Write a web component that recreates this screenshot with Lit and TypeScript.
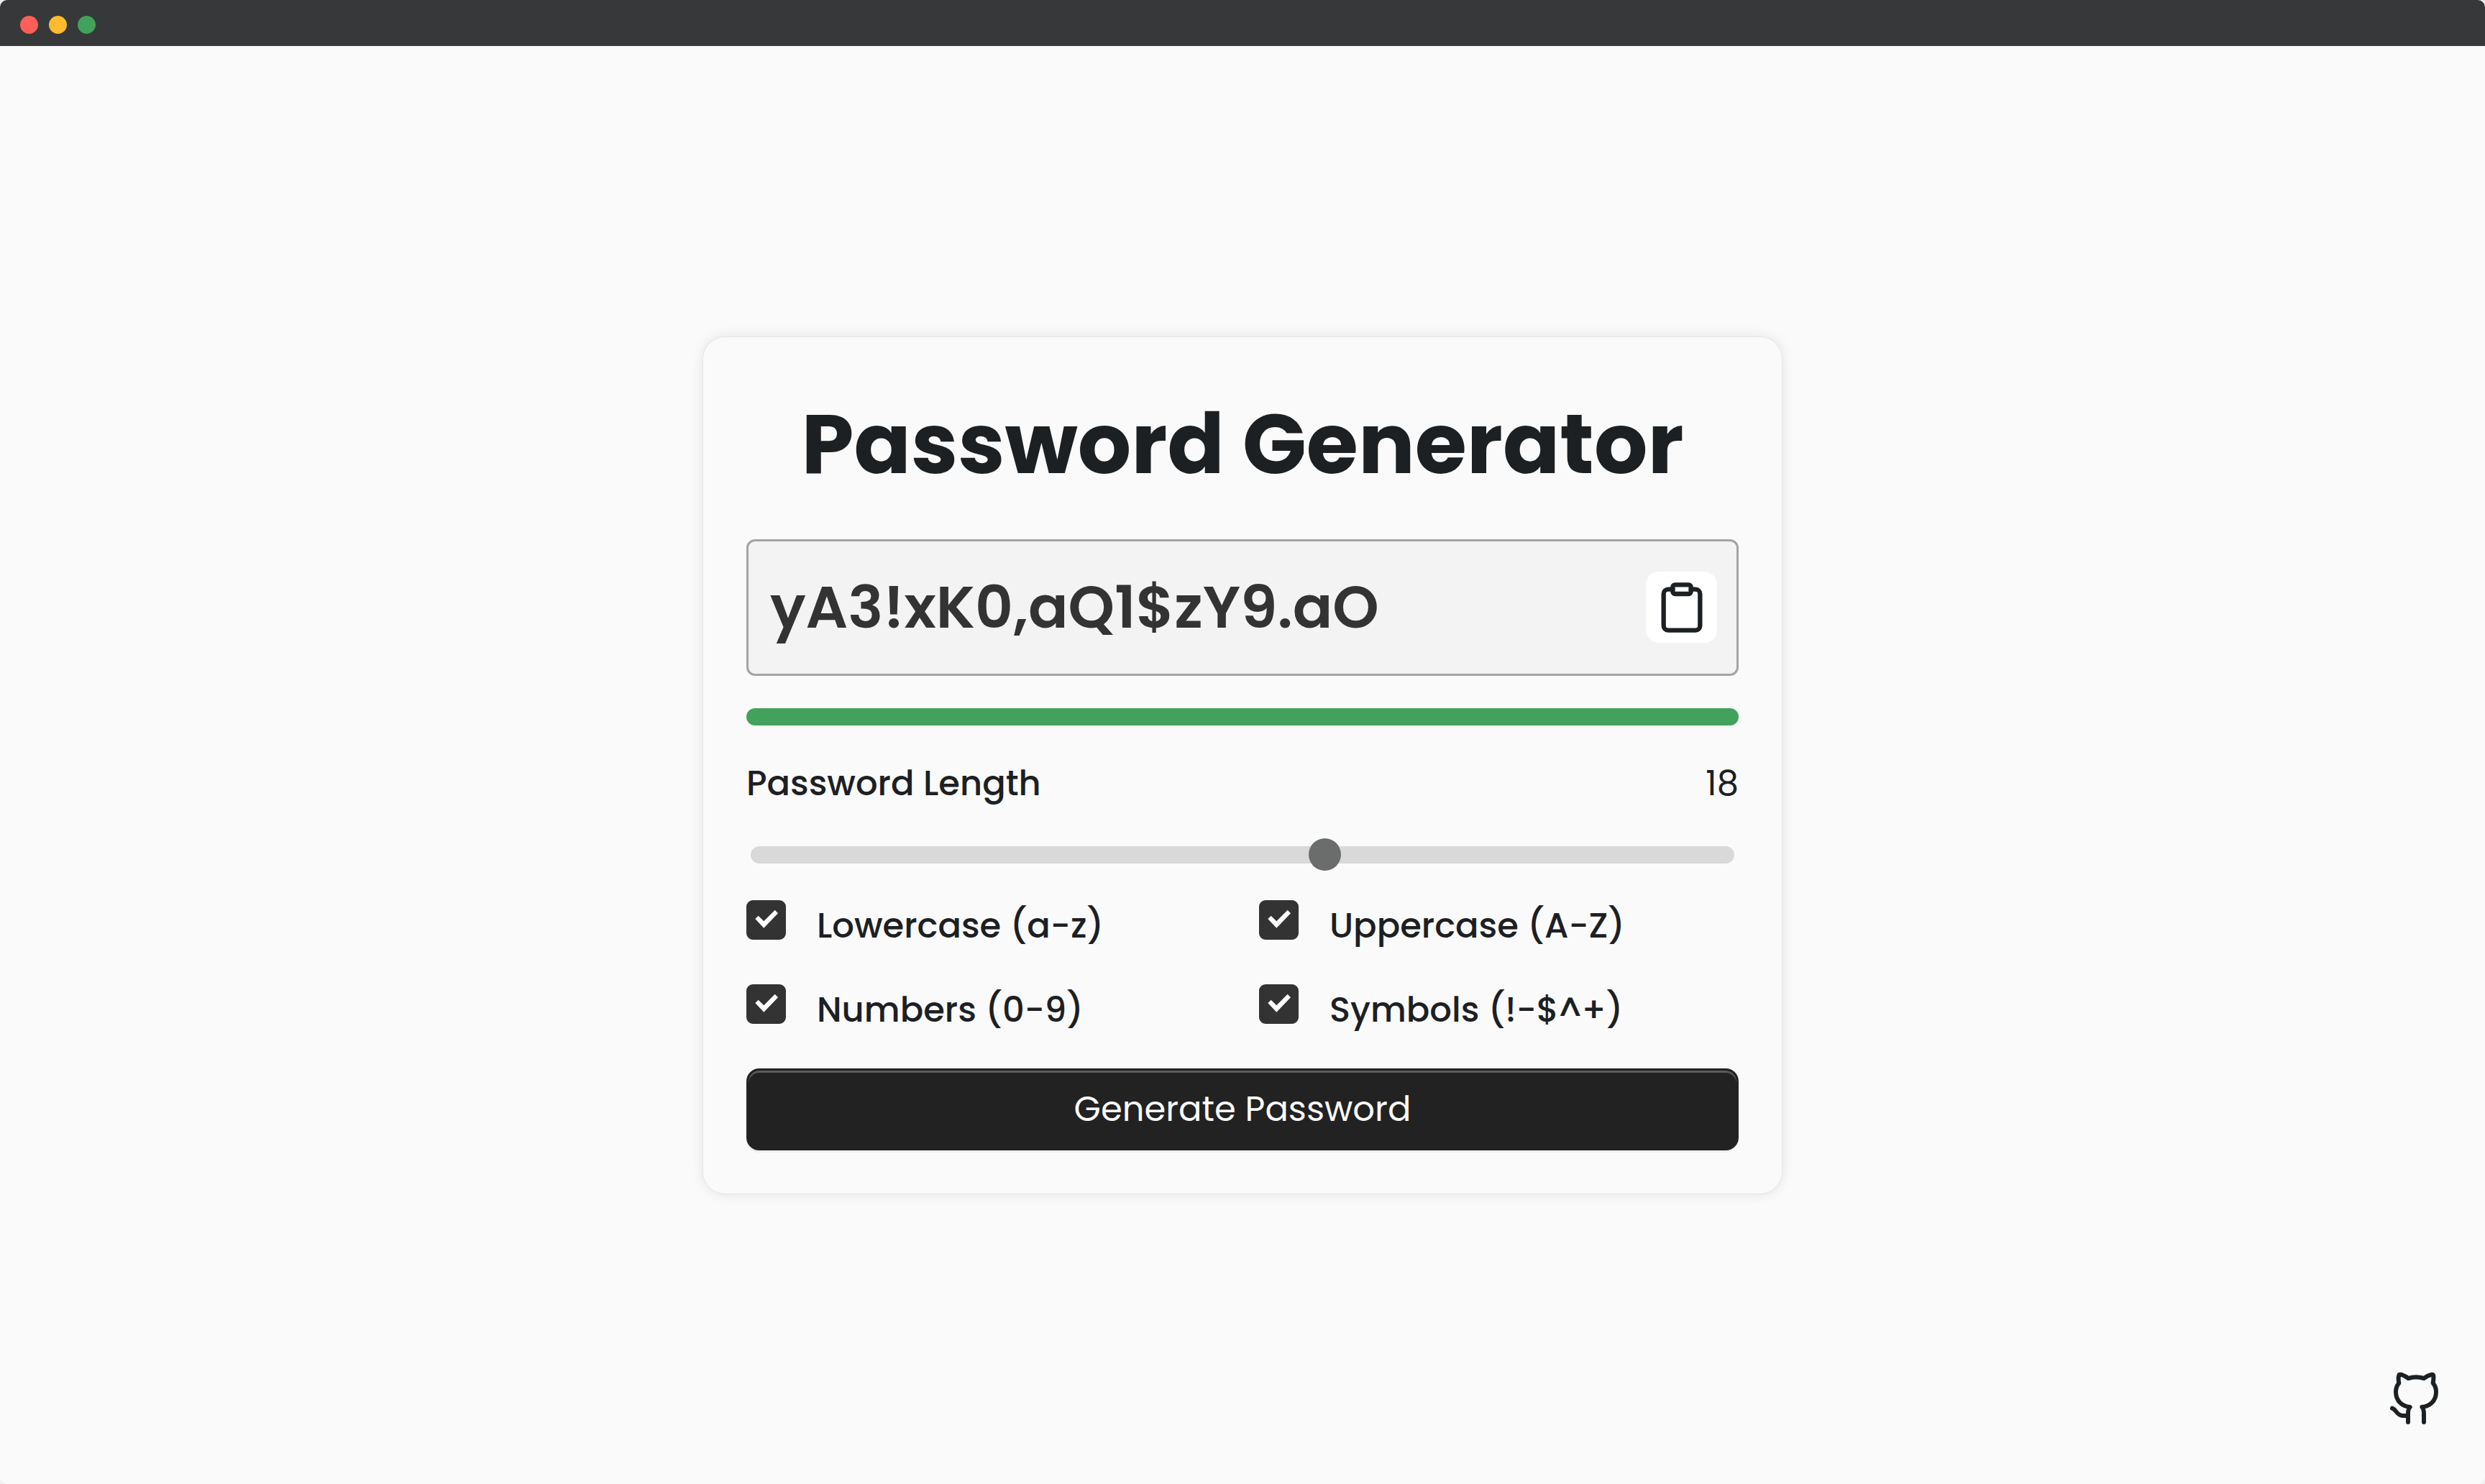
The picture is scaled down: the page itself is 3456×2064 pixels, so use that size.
import { LitElement, html, css } from "lit";
import { customElement, state } from "lit/decorators.js";

interface Option {
  id: string;
  label: string;
  checked: boolean;
}

@customElement("app-root")
export class AppRoot extends LitElement {
  static styles = css`
    :host {
      display: block;
      background: #eeeeee;
      font-family: Poppins, Inter, "Liberation Sans", sans-serif;
      font-size: 48px;
      line-height: 72px;
      color: #1d2023;
    }
    * {
      box-sizing: border-box;
    }
    .window {
      display: flex;
      flex-direction: column;
      min-height: 100vh;
      background: #fafafa;
      border-radius: 10px;
      overflow: hidden;
    }
    .titlebar {
      display: flex;
      align-items: center;
      gap: 15px;
      height: 64px;
      padding: 4px 28px 0;
      background: #37383a;
    }
    .dot {
      width: 25px;
      height: 25px;
      border-radius: 50%;
    }
    .close {
      background: #ff5f57;
    }
    .minimize {
      background: #ffbb2e;
    }
    .zoom {
      background: #42a25b;
    }
    .content {
      position: relative;
      flex: 1;
      display: grid;
      place-items: center;
    }
    .card {
      display: flex;
      flex-direction: column;
      width: 100%;
      max-width: 1500px;
      padding: 60px;
      border-radius: 30px;
      background: #fafafa;
      box-shadow: 0 0 0 1px rgba(0, 0, 0, 0.04), 0 0 18px rgba(0, 0, 0, 0.1);
    }
    h1 {
      margin: 0 0 45px;
      font-size: 117px;
      line-height: 176px;
      font-weight: 700;
      text-align: center;
      white-space: nowrap;
    }
    .output {
      display: flex;
      align-items: center;
      height: 190px;
      padding: 0 27px 0 30px;
      border: 3px solid #a3a5a4;
      border-radius: 12px;
      background: #f3f3f3;
    }
    .password {
      flex: 1;
      min-width: 0;
      padding: 0;
      border: 0;
      outline: 0;
      background: none;
      font: inherit;
      font-size: 82px;
      font-weight: 600;
      line-height: 120px;
      color: #333333;
    }
    .copy {
      display: grid;
      place-items: center;
      width: 99px;
      height: 99px;
      padding: 0;
      border: 0;
      border-radius: 18px;
      background: #ffffff;
      color: #1d2023;
    }
    .icon {
      display: block;
      width: 76px;
      height: 76px;
      fill: none;
      stroke: currentColor;
      stroke-width: 2;
      stroke-linecap: round;
      stroke-linejoin: round;
    }
    .strength {
      height: 24px;
      margin: 45px 0;
      border-radius: 12px;
      background: #42a25b;
    }
    .length {
      display: flex;
      justify-content: space-between;
    }
    .length label {
      font-weight: 500;
    }
    .slider {
      appearance: none;
      display: block;
      height: 24px;
      margin: 51px 6px;
      border-radius: 12px;
      background: #d9d9d9;
      outline: 0;
    }
    .slider::-webkit-slider-thumb {
      appearance: none;
      width: 45px;
      height: 45px;
      border: 0;
      border-radius: 50%;
      background: #6b6d6c;
    }
    .options {
      display: grid;
      grid-template-columns: 1fr 1fr;
      gap: 45px 46px;
    }
    .option {
      display: flex;
      align-items: flex-start;
      gap: 43px;
      font-weight: 500;
    }
    .box {
      display: grid;
      flex: none;
      width: 55px;
      height: 55px;
    }
    .box > * {
      grid-area: 1 / 1;
    }
    .box input {
      appearance: none;
      width: 55px;
      height: 55px;
      margin: 0;
      border-radius: 9px;
      border: 3px solid #333333;
    }
    .box input:checked {
      background: #333333;
    }
    .tick {
      width: 55px;
      height: 55px;
      fill: none;
      pointer-events: none;
    }
    .box input:checked + .tick {
      fill: #ffffff;
    }
    .generate {
      height: 114px;
      margin-top: 45px;
      padding: 0;
      border: 3px solid #222222;
      border-radius: 18px;
      background: #222222;
      box-shadow: inset 0 3px 0 #5b5b5b, 0 3px 0 #f0f0f0;
      font: inherit;
      color: #fafafa;
    }
    .github {
      position: absolute;
      right: 51px;
      bottom: 74px;
      color: #1d2023;
    }
    .cat {
      display: block;
      width: 90px;
      height: 95px;
      fill: none;
      stroke: currentColor;
      stroke-width: 18;
      stroke-linecap: round;
      stroke-linejoin: round;
    }
  `;

  @state() private password = "yA3!xK0,aQ1$zY9.aO";
  @state() private size = 18;
  @state() private options: Option[] = [
    { id: "lowercase", label: "Lowercase (a-z)", checked: true },
    { id: "uppercase", label: "Uppercase (A-Z)", checked: true },
    { id: "numbers", label: "Numbers (0-9)", checked: true },
    { id: "symbols", label: "Symbols (!-$^+)", checked: true },
  ];

  private sets: Record<string, string> = {
    lowercase: "abcdefghijklmnopqrstuvwxyz",
    uppercase: "ABCDEFGHIJKLMNOPQRSTUVWXYZ",
    numbers: "0123456789",
    symbols: "!$^+,.",
  };

  private generate() {
    const pool = this.options
      .filter((o) => o.checked)
      .map((o) => this.sets[o.id])
      .join("");
    if (!pool) return;
    this.password = Array.from(
      { length: this.size },
      () => pool[Math.floor(Math.random() * pool.length)],
    ).join("");
  }

  private toggle(id: string) {
    this.options = this.options.map((o) =>
      o.id === id ? { ...o, checked: !o.checked } : o,
    );
  }

  render() {
    return html`
      <div class="window">
        <header class="titlebar">
          <span class="dot close"></span>
          <span class="dot minimize"></span>
          <span class="dot zoom"></span>
        </header>
        <main class="content">
          <section class="card">
            <h1>Password Generator</h1>
            <div class="output">
              <input
                class="password"
                type="text"
                readonly
                aria-label="Generated password"
                .value=${this.password}
              />
              <button
                class="copy"
                type="button"
                aria-label="Copy password"
                @click=${() => navigator.clipboard?.writeText(this.password)}
              >
                <svg class="icon" viewBox="0 0 24 24" aria-hidden="true">
                  <path d="M16 4h2a2 2 0 0 1 2 2v14a2 2 0 0 1-2 2H6a2 2 0 0 1-2-2V6a2 2 0 0 1 2-2h2" />
                  <rect x="8" y="2" width="8" height="4" rx="1" />
                </svg>
              </button>
            </div>
            <div class="strength"></div>
            <div class="length">
              <label for="length">Password Length</label>
              <output for="length">${this.size}</output>
            </div>
            <input
              id="length"
              class="slider"
              type="range"
              min="1"
              max="30"
              .value=${String(this.size)}
              @input=${(e: Event) => {
                this.size = Number((e.target as HTMLInputElement).value);
              }}
            />
            <div class="options">
              ${this.options.map(
                (o) => html`
                  <div class="option">
                    <span class="box">
                      <input
                        type="checkbox"
                        id=${o.id}
                        .checked=${o.checked}
                        @change=${() => this.toggle(o.id)}
                      />
                      <svg class="tick" viewBox="0 0 55 55" aria-hidden="true">
                        <path d="M12.3 26 L16.7 21.7 L24.3 29.3 L39.7 13.7 L44 18.3 L24.3 38.7 Z" />
                      </svg>
                    </span>
                    <label for=${o.id}>${o.label}</label>
                  </div>
                `,
              )}
            </div>
            <button class="generate" type="button" @click=${this.generate}>
              Generate Password
            </button>
          </section>
          <a class="github" href="https://github.com" aria-label="GitHub">
            <svg class="cat" viewBox="0 0 270 285" aria-hidden="true">
              <path d="M102 249V212C102 200 103 193 110 186C78 182 51 162 51 122C51 104 56 95 64 86C61 72 61 60 65 51Q68 49 76 51Q90 56 103 66Q119 62 135 61Q151 62 168 66Q184 54 198 51Q205 49 207 52Q210 62 206 86C214 95 219 104 219 122C219 162 192 182 160 186C167 193 168 200 168 212V249" />
              <path d="M36 191C54 197 55 222 80 222H102" />
            </svg>
          </a>
        </main>
      </div>
    `;
  }
}
